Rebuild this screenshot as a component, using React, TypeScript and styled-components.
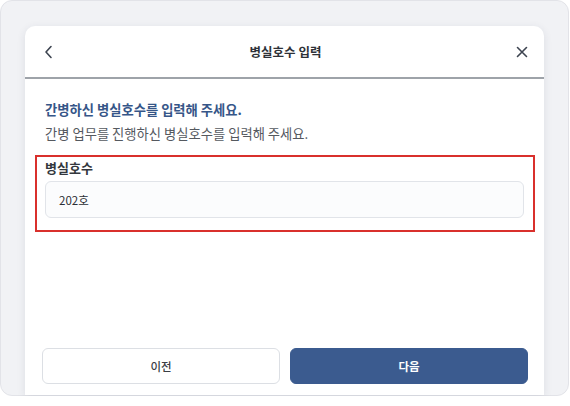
import React from "react";
import styled, { createGlobalStyle } from "styled-components";

const Global = createGlobalStyle`
  html, body { margin: 0; padding: 0; background: #ffffff; }
  body { font-family: "Noto Sans CJK KR", "Noto Sans", sans-serif; }
  * { box-sizing: border-box; }
`;

const Frame = styled.div`
  width: 569px;
  height: 396px;
  background: #f1f2f5;
  border: 1px solid #e2e3e8;
  border-radius: 12px;
  padding: 25px 24px 0 24px;
  display: flex;
`;

const Card = styled.div`
  flex: 1;
  background: #ffffff;
  border-radius: 10px 10px 0 0;
  box-shadow: 0 2px 8px rgba(40, 50, 80, 0.1);
  display: flex;
  flex-direction: column;
`;

const Header = styled.div`
  height: 53px;
  border-bottom: 2px solid #9ea3a9;
  display: flex;
  align-items: center;
  justify-content: space-between;
  padding: 0 14px 0 16px;
`;

const IconButton = styled.button`
  width: 16px;
  height: 16px;
  padding: 0;
  border: none;
  background: none;
  display: flex;
  align-items: center;
  justify-content: center;
  color: #3d4450;
`;

const Title = styled.h1`
  margin: 0;
  font-size: 12.5px;
  font-weight: 700;
  color: #2e3238;
`;

const Body = styled.div`
  flex: 1;
  padding: 21px 20px 0 20px;
  display: flex;
  flex-direction: column;
`;

const Heading = styled.h2`
  margin: 0;
  font-size: 13.3px;
  line-height: 20px;
  font-weight: 700;
  color: #365688;
`;

const Sub = styled.p`
  margin: 4px 0 0 0;
  font-size: 13.3px;
  line-height: 20px;
  color: #55595f;
`;

const Highlight = styled.div`
  margin: 11px -11px 0 -10px;
  border: 2px solid #d9302c;
  padding: 2px 9px 12px 8px;
  display: flex;
  flex-direction: column;
  gap: 4px;
`;

const Label = styled.label`
  font-size: 13px;
  line-height: 18px;
  font-weight: 700;
  color: #33373d;
`;

const Input = styled.div`
  height: 37px;
  border: 1px solid #e1e4e9;
  border-radius: 6px;
  background: #fbfcfd;
  display: flex;
  align-items: center;
  padding: 0 13px;
  font-size: 11.5px;
  color: #2b2f35;
`;

const Footer = styled.div`
  display: flex;
  gap: 10px;
  padding: 0 16px 11px 17px;
`;

const Button = styled.button<{ $primary?: boolean }>`
  flex: 1;
  height: 36px;
  border-radius: 6px;
  font-family: "Noto Sans CJK KR", "Noto Sans", sans-serif;
  font-size: 11.5px;
  font-weight: ${(p) => (p.$primary ? 700 : 500)};
  color: ${(p) => (p.$primary ? "#ffffff" : "#3a3e44")};
  background: ${(p) => (p.$primary ? "#3b5b8f" : "#ffffff")};
  border: 1px solid ${(p) => (p.$primary ? "#3b5b8f" : "#dcdfe4")};
`;

export default function App() {
  return (
    <>
      <Global />
      <Frame>
        <Card>
          <Header>
            <IconButton aria-label="back">
              <svg width="10" height="14" viewBox="0 0 10 14" fill="none">
                <path d="M7 1.5 L2 7 L7 12.5" stroke="currentColor" strokeWidth="1.6" strokeLinecap="round" strokeLinejoin="round" />
              </svg>
            </IconButton>
            <Title>병실호수 입력</Title>
            <IconButton aria-label="close">
              <svg width="12" height="12" viewBox="0 0 12 12" fill="none">
                <path d="M1.5 1.5 L10.5 10.5 M10.5 1.5 L1.5 10.5" stroke="currentColor" strokeWidth="1.6" strokeLinecap="round" />
              </svg>
            </IconButton>
          </Header>
          <Body>
            <Heading>간병하신 병실호수를 입력해 주세요.</Heading>
            <Sub>간병 업무를 진행하신 병실호수를 입력해 주세요.</Sub>
            <Highlight>
              <Label>병실호수</Label>
              <Input>202호</Input>
            </Highlight>
          </Body>
          <Footer>
            <Button>이전</Button>
            <Button $primary>다음</Button>
          </Footer>
        </Card>
      </Frame>
    </>
  );
}
